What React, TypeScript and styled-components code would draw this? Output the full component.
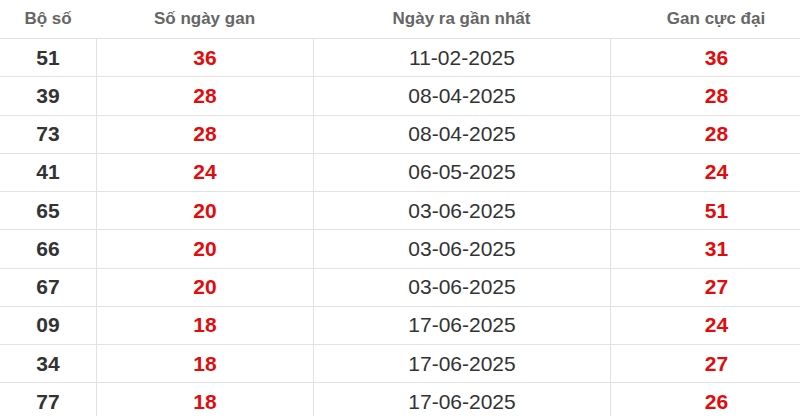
import React from "react";
import styled, { createGlobalStyle } from "styled-components";

const GlobalStyle = createGlobalStyle`
  html, body {
    margin: 0;
    padding: 0;
    background: #ffffff;
  }
  body {
    font-family: "Liberation Sans", Arial, sans-serif;
  }
`;

const Frame = styled.div`
  width: 800px;
  height: 416px;
  overflow: hidden;
  background: #fff;
`;

const Grid = styled.div`
  width: 822px;
  display: grid;
  grid-template-columns: 96px 217px 297px 212px;
`;

const HeadCell = styled.div`
  box-sizing: border-box;
  height: 39px;
  border-bottom: 1px solid #e2e2e2;
  display: flex;
  align-items: center;
  justify-content: center;
  color: #666666;
  font-weight: bold;
  font-size: 17px;
  padding-bottom: 1px;
`;

const Cell = styled.div<{ $first?: boolean; $tone: "dark" | "red" | "plain" }>`
  box-sizing: border-box;
  height: 38.25px;
  border-bottom: 1px solid #e2e2e2;
  border-left: ${(p) => (p.$first ? "none" : "1px solid #e2e2e2")};
  display: flex;
  align-items: center;
  justify-content: center;
  font-size: 21px;
  font-weight: ${(p) => (p.$tone === "plain" ? "normal" : "bold")};
  color: ${(p) => (p.$tone === "red" ? "#e30b0b" : "#333333")};
`;

const rows: [string, string, string, string][] = [
  ["51", "36", "11-02-2025", "36"],
  ["39", "28", "08-04-2025", "28"],
  ["73", "28", "08-04-2025", "28"],
  ["41", "24", "06-05-2025", "24"],
  ["65", "20", "03-06-2025", "51"],
  ["66", "20", "03-06-2025", "31"],
  ["67", "20", "03-06-2025", "27"],
  ["09", "18", "17-06-2025", "24"],
  ["34", "18", "17-06-2025", "27"],
  ["77", "18", "17-06-2025", "26"],
];

export default function App() {
  return (
    <>
      <GlobalStyle />
      <Frame>
        <Grid>
          <HeadCell>Bộ số</HeadCell>
          <HeadCell>Số ngày gan</HeadCell>
          <HeadCell>Ngày ra gần nhất</HeadCell>
          <HeadCell>Gan cực đại</HeadCell>
          {rows.map((r) => (
            <React.Fragment key={r[0]}>
              <Cell $first $tone="dark">{r[0]}</Cell>
              <Cell $tone="red">{r[1]}</Cell>
              <Cell $tone="plain">{r[2]}</Cell>
              <Cell $tone="red">{r[3]}</Cell>
            </React.Fragment>
          ))}
        </Grid>
      </Frame>
    </>
  );
}
